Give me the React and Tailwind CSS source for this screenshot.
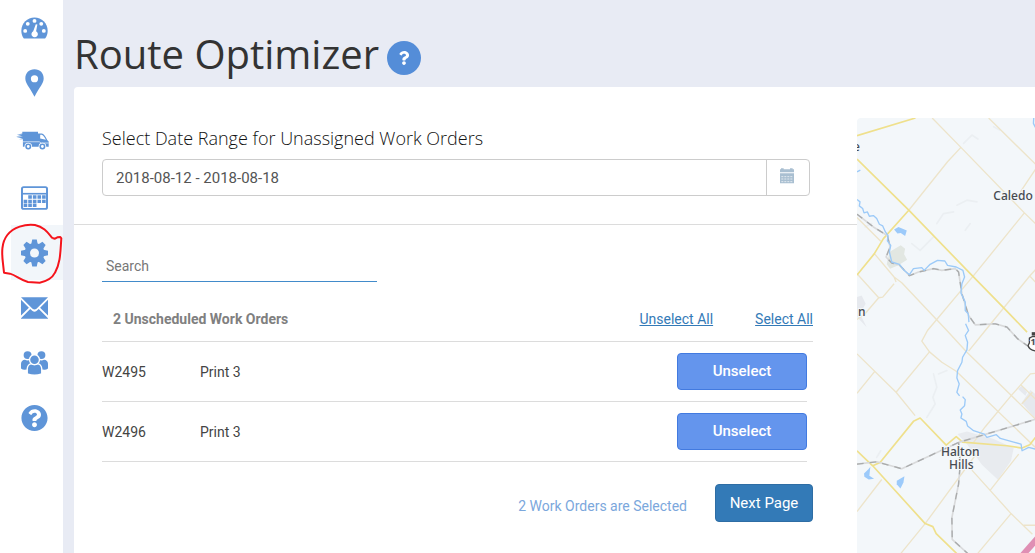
import { FaQuestionCircle, FaQuestion } from 'react-icons/fa';

const GaugeIcon = () => (
  <svg aria-hidden="true" className="h-6 w-[27px]" viewBox="0 0 84 72">
    <path fill="currentColor" d="M9 69 C4 62 1 54 1 45 C1 20 20 3 42 3 C64 3 83 20 83 45 C83 54 80 62 75 69 Z" />
    <g fill="#fff">
      <circle cx="13" cy="45" r="6" />
      <circle cx="21" cy="23" r="6" />
      <circle cx="42" cy="14" r="6" />
      <circle cx="63" cy="23" r="6" />
      <circle cx="71" cy="45" r="6" />
      <path d="M46 24 L51 25 L47 46 A10 10 0 1 1 38 46 Z" />
    </g>
  </svg>
);

const PinIcon = () => (
  <svg aria-hidden="true" className="h-7 w-[19px]" viewBox="1 0 58 84">
    <path
      fill="currentColor"
      fillRule="evenodd"
      d="M30 0 C13 0 2 12 2 28 C2 44 14 52 30 84 C46 52 58 44 58 28 C58 12 47 0 30 0 Z M30 18 A11 11 0 1 1 30 40 A11 11 0 1 1 30 18 Z"
    />
  </svg>
);

const TruckIcon = () => (
  <svg aria-hidden="true" className="mr-1 h-[19px] w-[33px]" viewBox="2 0 105 60">
    <path fill="currentColor" d="M22 2 H72 V8 H84 C91 8 98 22 102 29 L106 33 V50 H24 V26 H12 L24 22 H4 L24 17 H2 L22 12 H4 L22 8 Z" />
    <path fill="#fff" d="M79 12 H84 C89 13 94 22 97 28 L79 24 Z" />
    <path stroke="#fff" strokeWidth="2" d="M24 34 H76 L82 38 H106" fill="none" />
    <circle cx="41" cy="49" r="12" fill="#fff" />
    <circle cx="86" cy="49" r="12" fill="#fff" />
    <circle cx="41" cy="49" r="7" fill="none" stroke="currentColor" strokeWidth="5" />
    <circle cx="86" cy="49" r="7" fill="none" stroke="currentColor" strokeWidth="5" />
  </svg>
);

const ScheduleIcon = () => (
  <svg aria-hidden="true" className="h-6 w-[27px]" viewBox="1 0 82 72">
    <rect x="4" y="3" width="76" height="66" rx="5" fill="none" stroke="currentColor" strokeWidth="6" />
    <path stroke="currentColor" strokeWidth="5" d="M4 23 H80" />
    <path stroke="currentColor" strokeWidth="10" strokeDasharray="11 3" d="M23 33 H76 M9 46 H76" />
    <path stroke="currentColor" strokeWidth="10" strokeDasharray="11 3" d="M9 58 H48" />
  </svg>
);

const GearIcon = () => (
  <svg aria-hidden="true" className="h-7 w-[27px]" viewBox="0 0 84 84">
    <g fill="currentColor">
      <circle cx="42" cy="42" r="31" />
      {[0, 45, 90, 135].map((angle) => (
        <path key={angle} transform={`rotate(${angle} 42 42)`} d="M35 0 H49 L52 14 V70 L49 84 H35 L32 70 V14 Z" />
      ))}
    </g>
    <circle cx="42" cy="42" r="14" fill="#f2f6fa" />
  </svg>
);

const MailIcon = () => (
  <svg aria-hidden="true" className="h-6 w-[27px]" viewBox="1 0 82 72">
    <g fill="currentColor">
      <path d="M1 3 H83 L48 38 Q42 43 36 38 Z" />
      <path d="M1 11 L25 35 L1 59 Z M83 11 L59 35 L83 59 Z" />
      <path d="M29 39 L36 45 Q42 50 48 45 L55 39 L83 67 V69 H1 V67 Z" />
    </g>
  </svg>
);

const TeamIcon = () => (
  <svg aria-hidden="true" className="h-6 w-[27px]" viewBox="1 0 82 72">
    <g fill="currentColor">
      <circle cx="21" cy="12" r="12" />
      <circle cx="63" cy="12" r="12" />
      <path d="M1 53 V38 Q2 27 13 26 Q21 31 29 26 L55 26 Q63 31 71 26 Q82 27 83 38 V53 Q76 58 68 56 H16 Q8 58 1 53 Z" />
    </g>
    <g fill="currentColor" stroke="#fff" strokeWidth="4">
      <path d="M20 69 V53 Q21 40 34 38 Q42 43 50 38 Q63 40 64 53 V69 Q42 77 20 69 Z" />
      <circle cx="42" cy="26" r="15" />
    </g>
  </svg>
);

const HelpIcon = () => <FaQuestionCircle aria-hidden="true" className="h-7 w-[27px]" />;

const CalendarIcon = () => (
  <svg aria-hidden="true" className="h-4 w-3.5 text-[#a9bfd1]" viewBox="0 0 42 48">
    <path fill="currentColor" d="M0 4 H3 V1 H11 V4 H30 V1 H38 V4 H42 V13 H0 Z M0 16 H42 V46 H0 Z" />
    <path stroke="#fff" strokeWidth="2" strokeDasharray="6 3" d="M4 26 H39 M4 33 H39 M4 41 H39" />
  </svg>
);

const navItems = [
  { label: 'Dashboard', Icon: GaugeIcon },
  { label: 'Map', Icon: PinIcon },
  { label: 'Fleet', Icon: TruckIcon, tall: true },
  { label: 'Schedule', Icon: ScheduleIcon },
  { label: 'Settings', Icon: GearIcon, active: true },
  { label: 'Messages', Icon: MailIcon },
  { label: 'Team', Icon: TeamIcon },
  { label: 'Help', Icon: HelpIcon },
];

const workOrders = [
  { id: 'W2495', name: 'Print 3' },
  { id: 'W2496', name: 'Print 3' },
];

function Sidebar() {
  return (
    <nav className="w-[63px] shrink-0 bg-white pl-[11px] text-[#5f95d8]">
      {navItems.map(({ label, Icon, tall, active }) => (
        <a
          key={label}
          href="#"
          aria-label={label}
          className={`relative flex items-center justify-center pr-[5px] ${tall ? 'h-[60px]' : 'h-[55px]'} ${active ? 'bg-[#f2f6fa]' : ''}`}
        >
          <Icon />
          {active && (
            <svg aria-hidden="true" className="absolute -top-1 -left-[11px] h-[65px] w-[63px]" viewBox="0 18 189 195">
              <path
                fill="none"
                stroke="#f5141c"
                strokeWidth="6"
                strokeLinejoin="round"
                d="M157 69 C145 55 133 36 105 30 C75 26 40 37 22 60 C4 83 5 113 9 146 L12 173 L30 176 C50 182 60 195 84 201 L119 203 C145 198 157 189 165 173 C182 142 181 110 184 70 L181 66 L172 67 L165 71 L157 69"
              />
            </svg>
          )}
        </a>
      ))}
    </nav>
  );
}

function DateRange() {
  return (
    <div className="border-b border-[#dcdcdc] pt-[39px] pr-[47px] pb-7 pl-7">
      <label htmlFor="range" className="block font-['Open_Sans',sans-serif] text-lg leading-6 font-light text-[#111]">
        Select Date Range for Unassigned Work Orders
      </label>
      <div className="mt-[9px] flex h-[37px] rounded border border-[#ccc]">
        <input id="range" type="text" defaultValue="2018-08-12 - 2018-08-18" className="min-w-0 flex-1 px-[13px] pt-0.5 text-[15px] text-[#555] outline-none" />
        <button type="button" aria-label="Open calendar" className="flex w-[43px] items-center justify-center border-l border-[#ccc] pr-0.5 pb-1">
          <CalendarIcon />
        </button>
      </div>
    </div>
  );
}

function WorkOrders() {
  return (
    <div className="pt-6 pr-11 pb-8 pl-7">
      <input
        type="search"
        aria-label="Search"
        placeholder="Search"
        className="block h-[33px] w-[275px] border-b border-[#428bca] px-1 pt-0.5 text-sm outline-none placeholder:text-[#777]"
      />
      <div className="flex h-[60px] items-center border-b border-[#dcdcdc] pt-3.5 pl-[11px] text-sm">
        <h2 className="flex-1 font-bold text-[#808080]">2 Unscheduled Work Orders</h2>
        <a href="#" className="text-[#337ab7] underline">Unselect All</a>
        <a href="#" className="ml-[42px] text-[#337ab7] underline">Select All</a>
      </div>
      <div className="pr-1.5">
        <table className="w-full border-separate border-spacing-0 text-sm text-[#444]">
          <tbody>
            {workOrders.map((order) => (
              <tr key={order.id} className="h-[60px]">
                <td className="w-[98px] border-b border-[#dcdcdc]">{order.id}</td>
                <td className="border-b border-[#dcdcdc]">{order.name}</td>
                <td className="w-[130px] border-b border-[#dcdcdc]">
                  <button type="button" className="block h-[37px] w-full rounded border border-[#427ae0] bg-[#6495ed] text-[15px] font-medium text-white">
                    Unselect
                  </button>
                </td>
              </tr>
            ))}
          </tbody>
        </table>
      </div>
      <div className="mt-[22px] flex items-center justify-end gap-7">
        <p className="pt-1.5 text-sm text-[#7ba7dc]">2 Work Orders are Selected</p>
        <button type="button" className="h-[38px] w-[98px] rounded border border-[#2e6da4] bg-[#337ab7] text-[15px] text-white">
          Next Page
        </button>
      </div>
    </div>
  );
}

function RouteMap() {
  return (
    <svg role="img" aria-label="Map" className="h-full w-full rounded-tl bg-[#f3f7fa]" viewBox="0 0 178 435" preserveAspectRatio="xMinYMin slice">
      <g transform="translate(-7 -8) scale(.333333)" fill="none" strokeLinejoin="round">
        {/* hills and built-up areas */}
        <g stroke="#ebeff2" strokeWidth="5" strokeLinecap="round">
          <path d="M340 100 l25 -25 l18 12 M430 50 l18 10 M320 285 l30 -15 l30 5 M260 340 l20 -30 l30 -5 M185 400 l25 20 l40 -40 M345 360 l15 -20" />
          <path d="M250 790 L260 830 L248 860 L255 880 L230 920 M265 790 L290 780 M80 1040 l12 -20 M45 350 l20 -10" />
        </g>
        <path fill="#e2e7e2" d="M118 425 L152 405 L165 415 L162 432 L171 448 L145 465 L120 475 L110 462 Z" />
        <path fill="#e8ebef" d="M322 970 L350 962 L430 985 L490 1012 L482 1050 L443 1107 L395 1062 L350 1000 Z" />
        <path fill="#e6e9ee" d="M503 835 L515 825 L530 845 L525 855 Z M514 876 L540 838 L555 850 V925 Z M21 560 L35 555 L47 580 L30 610 L50 650 L21 620 Z" />

        {/* side roads */}
        <g stroke="#ede4ca" strokeWidth="4">
          <path d="M246 24 L332 112 L522 308 L555 340 M332 112 L292 155 L176 300 M415 24 L555 162 M555 178 L510 245 M522 308 L368 498 L232 660 L215 692 L238 724 L275 755 L318 782 L555 1010" />
          <path d="M21 322 L92 393 M73 430 L132 500 L155 517 L290 660 L350 725 L555 925 M21 490 L86 562 L98 560 L132 520 M86 562 L45 610 L21 627 M132 500 L138 515" />
          <path d="M555 478 L538 497 L405 660 L355 722 M538 497 L555 515 M238 724 L138 845 L21 730 M73 784 L21 848 M138 845 L195 915 M555 788 L540 790 L485 852 L405 948 L370 995" />
          <path d="M511 822 L555 865 M546 845 L514 880 M365 1078 L482 1208 L546 1270 M505 1030 L420 1138 M482 1208 L380 1330 M385 1020 L225 1238 L150 1330 M95 1106 L21 1202 M520 1243 H555" />
        </g>

        {/* highways */}
        <g stroke="#efe08c" strokeWidth="5">
          <path d="M21 77 L196 24 M21 147 L176 300 L368 498 L458 590 L530 665 M176 300 L100 385 L73 430 L21 494" />
          <path d="M21 1020 L68 1065 L225 1238 L248 1247 L258 1268 L322 1330 M68 1065 L90 1055 L190 932 L210 922 L288 1003 L318 978 L337 994 L470 1005 L515 1012 L538 1002 L555 980" />
        </g>

        {/* railways */}
        <g stroke="#d9dadb" strokeWidth="5">
          <path d="M21 312 L70 350 L112 376 L120 410 L108 440 L125 458 L148 464 L178 496 L205 485 L250 475 L275 480 L315 475 L325 485 L335 550 L355 615 L375 643 L435 640 L470 650 L502 685 L530 705 L555 720" />
          <path d="M21 1060 L80 1053 L155 1074 L325 995 L555 926 M325 995 L330 1060 L325 1120 L305 1220 L306 1285 L355 1330" />
        </g>
        <g stroke="#a9abac" strokeWidth="4" strokeDasharray="20 18">
          <path d="M21 312 L70 350 L112 376 L120 410 L108 440 L125 458 L148 464 L178 496 L205 485 L250 475 L275 480 L315 475 L325 485 L335 550 L355 615 L375 643 L435 640 L470 650 L502 685 L530 705 L555 720" />
          <path d="M21 1060 L80 1053 L155 1074 L325 995 L555 926 M325 995 L330 1060 L325 1120 L305 1220 L306 1285 L355 1330" />
        </g>

        {/* rivers and lakes */}
        <g stroke="#9ccaf8" strokeWidth="4">
          <path d="M21 268 L30 275 L28 287 L38 295 L42 308 L52 305 L58 318 L70 316 L80 325 L88 342 L98 347 L106 365 L114 376 L112 392 L122 405 L118 425 L125 455 L148 462 L160 478 L178 493 L190 475 L215 472 L222 480 L240 462 L262 450 L284 452 L292 465 L318 470 L338 480 L343 500 L335 520 L332 548 L345 575 L345 600 L354 610 L356 635" />
          <path d="M346 640 L355 660 L345 675 L352 695 L350 718 L337 740 L335 755 L322 780 L320 802 L327 820 L320 845 L328 856 M337 858 L345 867 L343 885 L330 898 L335 910 L332 922 L348 932 L352 946 L370 960 L402 970 L410 980 L438 972 L450 983 L490 994 L512 1000 L515 1020 L535 1010 L555 1015" />
          <path d="M21 185 L31 180 M550 24 L549 40 L555 52" />
        </g>
        <g fill="#9ccafa">
          <path d="M132 358 L145 350 L170 361 L165 377 L152 368 L142 370 Z" />
          <path d="M42 1088 L55 1075 L61 1068 L58 1095 L72 1104 L56 1106 L43 1098 Z" />
          <path d="M140 1110 L163 1096 L160 1115 L151 1133 L140 1120 Z" />
        </g>

        <path stroke="#e08fb4" strokeWidth="18" d="M510 1340 L570 1272" />
        <path fill="#fff" stroke="#444" strokeWidth="4" d="M546 678 L537 683 V697 L533 705 Q537 720 560 722 V678 Z" />
        <path fill="#444" d="M544 665 H560 V675 H544 Z" />
      </g>
      <g className="font-['Noto_Sans',sans-serif]" fill="#464a50" stroke="#f3f7fa" strokeWidth="2" paintOrder="stroke" fontSize="12" fontWeight="500">
        <text x="136" y="82">Caledo</text>
        <text x="-4" y="33">e</text>
        <text x="1" y="198">n</text>
        <text textAnchor="middle">
          <tspan x="103" y="337">Halton</tspan>
          <tspan x="104" y="350">Hills</tspan>
        </text>
        <text x="173" y="226" fontSize="9" fontWeight="700">1</text>
      </g>
    </svg>
  );
}

function App() {
  return (
    <div className="flex min-h-screen bg-[#e8ebf4] font-[Roboto,sans-serif]">
      <Sidebar />
      <main className="flex min-w-0 flex-1 flex-col pl-[11px]">
        <header className="flex h-[87px] items-center gap-2 pt-7">
          <h1 className="pb-2 font-['Open_Sans',sans-serif] text-[40px] leading-none text-[#333]">Route Optimizer</h1>
          <button type="button" aria-label="Help" className="flex size-[34px] items-center justify-center rounded-full bg-[#548dd8] text-white">
            <FaQuestion className="size-3.5" />
          </button>
        </header>
        <div className="grid flex-1 grid-cols-[783fr_178fr] rounded-tl bg-white">
          <section>
            <DateRange />
            <WorkOrders />
          </section>
          <div className="relative mt-[31px]">
            <div className="absolute inset-0">
              <RouteMap />
            </div>
          </div>
        </div>
      </main>
    </div>
  );
}

export default App;
